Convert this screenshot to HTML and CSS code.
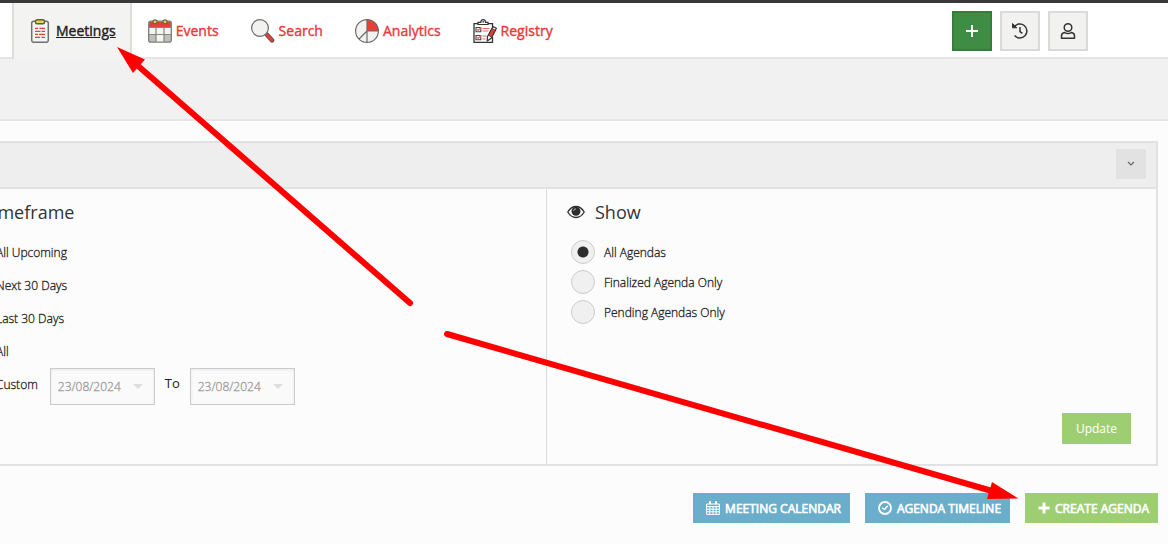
FILE: index.html
```html
<!DOCTYPE html>
<html lang="en">
<head>
<meta charset="utf-8">
<title>Meetings</title>
<link rel="stylesheet" href="styles.css">
</head>
<body>
<header class="topbar">
  <nav class="nav">
    <a class="nav-item active" href="#meetings">
      <svg class="nav-icon" viewBox="0 0 24 24" aria-hidden="true">
        <rect x="3.7" y="2.3" width="16.6" height="21" rx="2" fill="#f4f4f2" stroke="#6f6f6d" stroke-width="1.5"/>
        <rect x="7.5" y="0.8" width="9" height="4" rx="1.6" fill="#e9d63b" stroke="#5d5d4a" stroke-width="1.4"/>
        <path d="M7 9.3h3.2M11.5 9.3H17M7 12.3h5.5M13.5 12.3H17M7 15.3h3M11 15.3h6M7 18.3h5M13.5 18.3H17" stroke="#e83f36" stroke-width="1.2"/>
      </svg>
      <span class="nav-label">Meetings</span>
    </a>
    <a class="nav-item" href="#events">
      <svg class="nav-icon" viewBox="0 0 24 24" aria-hidden="true">
        <rect x="0.7" y="2.2" width="22.6" height="21" rx="1.8" fill="#f4f4f2"/>
        <path d="M1 8V4q0-1.6 1.6-1.6h18.8Q23 2.400 23 4v4z" fill="#e83f36"/>
        <path d="M1 15.500h7V23H1zM16 15.500h7V23h-7z" fill="#bfbfbb"/>
        <rect x="0.7" y="2.2" width="22.600" height="21" rx="1.8" fill="none" stroke="#7c7c7a" stroke-width="1.300"/>
        <path d="M1 8.500h22M1 15.500h22M8 8.500V23M16 8.500V23" stroke="#858583" stroke-width="1.200"/>
        <circle cx="7" cy="2.800" r="2" fill="#e9d63b" stroke="#66664f" stroke-width="1.200"/>
        <circle cx="17" cy="2.800" r="2" fill="#e9d63b" stroke="#66664f" stroke-width="1.200"/>
      </svg>
      <span class="nav-label">Events</span>
    </a>
    <a class="nav-item" href="#search">
      <svg class="nav-icon" viewBox="0 0 24 24" aria-hidden="true">
        <path d="M14 14l2 2" stroke="#555" stroke-width="2"/>
        <path d="M16 15.800l5 5.400" stroke="#5a4a48" stroke-width="4.600" stroke-linecap="round"/>
        <path d="M16.200 16l4.600 5" stroke="#e83f36" stroke-width="3" stroke-linecap="round"/>
        <circle cx="9" cy="9" r="8.400" fill="#f2f2f0" stroke="#6b6b69" stroke-width="1.200"/>
      </svg>
      <span class="nav-label">Search</span>
    </a>
    <a class="nav-item" href="#analytics">
      <svg class="nav-icon" viewBox="0 0 24 24" aria-hidden="true">
        <circle cx="12" cy="12" r="11.400" fill="#f2f2f0"/>
        <path d="M12 .6A11.400 11.400 0 0 1 23.400 12H12z" fill="#e83f36"/>
        <circle cx="12" cy="12" r="11.400" fill="none" stroke="#6b6b69" stroke-width="1.200"/>
        <path d="M12 .6v22.800M12 12h11.400M12 12l-8 8" fill="none" stroke="#6b6b69" stroke-width="1.200"/>
      </svg>
      <span class="nav-label">Analytics</span>
    </a>
    <a class="nav-item" href="#registry">
      <svg class="nav-icon" viewBox="0 0 24 24" aria-hidden="true">
        <path d="M19.500 18v5.300H1V4.700h4M15 4.700h4.500V8" fill="none" stroke="#333" stroke-width="1.300"/>
        <path d="M5 5.500V3.400h2.800q.2-2.700 2.400-2.700t2.400 2.700H15v2.100z" fill="#fff" stroke="#333" stroke-width="1.200"/>
        <circle cx="10.200" cy="2.900" r=".8" fill="#333"/>
        <path d="M3 8.500h4.800v4.200H3zM3 16.500h4.800v4.200H3z" fill="#fff" stroke="#444" stroke-width="1.100"/>
        <path d="M4 10.200l1.300 1.200 2.600-3M4 18.200l1.300 1.200 2.600-3M9.500 9.500h7M9.500 12h6M9.500 17h4M9.500 20h3" fill="none" stroke="#ec6a60" stroke-width="1.100"/>
        <path d="M20 7.500l3.400 1.700-5.200 10-4 2.800.3-4.500z" fill="#fff" stroke="#333" stroke-width="1.200" stroke-linejoin="round"/>
        <path d="M19 9.500l3.500 1.800-3.800 7-3.300-2z" fill="#d9402f" stroke="#333" stroke-width=".8"/>
      </svg>
      <span class="nav-label">Registry</span>
    </a>
  </nav>
  <div class="actions">
    <button class="square add" type="button" aria-label="Add">
      <svg width="14" height="14" viewBox="0 0 14 14"><path d="M7 1v12M1 7h12" stroke="#fff" stroke-width="2"/></svg>
    </button>
    <button class="square" type="button" aria-label="History">
      <svg width="18" height="18" viewBox="0 0 18 18" fill="none" stroke="#333" stroke-width="1.500"><path d="M3 5.200a7 7 0 1 1 .6 8.400M9 5v4.600l2.400 1.800"/><path d="M1.500 1.500v4.300h4.400z" fill="#333" stroke-width="1"/></svg>
    </button>
    <button class="square" type="button" aria-label="Account">
      <svg width="16" height="18" viewBox="0 0 16 18" fill="none" stroke="#333" stroke-width="1.500"><circle cx="8" cy="5.500" r="3.800"/><path d="M4.800 10.600Q1.500 11 1.500 14v2.200h13V14q0-3-3.300-3.400Q8 12.600 4.800 10.600z" stroke-linejoin="round"/></svg>
    </button>
  </div>
</header>
<div class="band"></div>
<main class="main">
  <section class="panel">
    <div class="panel-head">
      <button class="toggle" type="button" aria-label="Collapse">
        <svg width="8" height="6" viewBox="0 0 8 6"><path d="M1 1l3 3 3-3" fill="none" stroke="#666" stroke-width="1.200"/></svg>
      </button>
    </div>
    <div class="panel-body">
      <div class="col timeframe">
        <h2 class="title">Timeframe</h2>
        <div class="options">
          <label class="option"><input class="radio" type="radio" name="timeframe" checked><span>All Upcoming</span></label>
          <label class="option"><input class="radio" type="radio" name="timeframe"><span>Next 30 Days</span></label>
          <label class="option"><input class="radio" type="radio" name="timeframe"><span>Last 30 Days</span></label>
          <label class="option"><input class="radio" type="radio" name="timeframe"><span>All</span></label>
          <div class="custom">
            <label class="option"><input class="radio" type="radio" name="timeframe"><span>Custom</span></label>
            <div class="date">
              <input class="date-input" type="text" value="23/08/2024" aria-label="From date" disabled>
              <span class="caret"></span>
            </div>
            <label class="to" for="to-date">To</label>
            <div class="date">
              <input class="date-input" id="to-date" type="text" value="23/08/2024" disabled>
              <span class="caret"></span>
            </div>
          </div>
        </div>
      </div>
      <div class="col show">
        <h2 class="title">
          <svg class="eye" viewBox="0 0 18 14" aria-hidden="true"><path d="M.8 7Q4 1.500 9 1.500T17.200 7Q14 12.500 9 12.500T.8 7z" fill="none" stroke="#2d2d2d" stroke-width="1.300"/><circle cx="9" cy="6.300" r="4.500" fill="#2d2d2d"/><path d="M6.700 5.800Q7 4 8.800 3.800" fill="none" stroke="#ddd" stroke-width=".9"/></svg>
          Show
        </h2>
        <div class="options">
          <label class="option"><input class="radio" type="radio" name="show" checked><span>All Agendas</span></label>
          <label class="option"><input class="radio" type="radio" name="show"><span>Finalized Agenda Only</span></label>
          <label class="option"><input class="radio" type="radio" name="show"><span>Pending Agendas Only</span></label>
        </div>
        <button class="update" type="button">Update</button>
      </div>
    </div>
  </section>
  <div class="footer-actions">
    <button class="btn blue" type="button">
      <svg width="14" height="14" viewBox="0 0 14 14" aria-hidden="true"><path d="M.6 3h12.800v10.400H.6zM.6 5.600h12.800M.6 8.200h12.800M.6 10.800h12.800M3.800 5v8M7 5v8M10.200 5v8" fill="none" stroke="#fff" stroke-width="1"/><path d="M4 .3v3M10 .3v3" stroke="#fff" stroke-width="2"/></svg>
      <span>MEETING CALENDAR</span>
    </button>
    <button class="btn blue" type="button">
      <svg width="14" height="14" viewBox="0 0 14 14" aria-hidden="true"><circle cx="7" cy="7" r="6" fill="none" stroke="#fff" stroke-width="1.800"/><path d="M4.200 7l2.300 1.400L9.700 4.800" fill="none" stroke="#fff" stroke-width="1.500"/></svg>
      <span>AGENDA TIMELINE</span>
    </button>
    <button class="btn green" type="button">
      <svg width="12" height="12" viewBox="0 0 12 12" aria-hidden="true"><path d="M6 .5v11M.5 6h11" stroke="#fff" stroke-width="3"/></svg>
      <span>CREATE AGENDA</span>
    </button>
  </div>
</main>
<svg class="arrows" width="1168" height="544" viewBox="0 0 1168 544" aria-hidden="true">
  <g stroke="#f00" stroke-width="6" stroke-linecap="round"><path d="M137 65L410 303"/><path d="M447 334L992 491"/></g>
  <path d="M117 47L145 59.500L133 73zM1018.500 498.500L992 482L987 499z" fill="#f00"/>
</svg>
</body>
</html>
```
FILE: styles.css
```css
* { box-sizing: border-box; }
body {
  margin: 0;
  background: #fcfcfc;
  color: #222;
  font-family: "Open Sans", "Noto Sans", sans-serif;
  font-size: 12px;
  overflow-x: hidden;
}
button, input { font: inherit; }
button { display: flex; align-items: center; justify-content: center; border: 0; padding: 0; cursor: pointer; }
.topbar {
  display: flex;
  justify-content: space-between;
  height: 59px;
  padding: 0 80px 0 12px;
  background: #fff;
  border-top: 3px solid #3a3838;
  border-bottom: 2px solid #e5e5e5;
}
.nav { display: flex; height: 56px; }
.nav-item {
  display: flex;
  align-items: center;
  gap: 4px;
  padding: 0 16px;
  color: #e83a3c;
  font-size: 14px;
  -webkit-text-stroke: 0.4px currentColor;
  text-decoration: none;
}
.nav-item.active {
  padding: 0 14px;
  background: #f3f3f1;
  border: solid #dcdcda;
  border-width: 0 2px;
  color: #222;
  text-decoration: underline;
}
.nav-icon { width: 24px; height: 24px; }
.nav-label { padding-bottom: 2px; }
.actions { display: flex; gap: 8px; padding-top: 8px; }
.square { width: 40px; height: 40px; background: #f2f2f0; border: 2px solid #dadada; }
.square.add { background: #3f8d45; border-color: #357d3b; }
.band { height: 62px; background: #f1f1f1; border-bottom: 2px solid #e5e5e5; }
.main { padding: 20px 10px 20px 0; }
.panel { margin-left: -66px; border: 2px solid #e2e2e2; }
.panel-head {
  display: flex;
  justify-content: flex-end;
  padding: 6px 10px 8px;
  background: #eee;
  border-bottom: 2px solid #e2e2e2;
}
.toggle { width: 30px; height: 30px; background: #e2e2e2; }
.panel-body { display: grid; grid-template-columns: 1fr 1fr; }
.col { display: flex; flex-direction: column; padding: 8px 20px 20px; }
.show { min-height: 275px; border-left: 1px solid #dadada; }
.title {
  display: flex;
  align-items: center;
  gap: 10px;
  margin: 0;
  color: #333;
  font-size: 18px;
  line-height: 30px;
  font-weight: 400;
}
.timeframe .title { padding-left: 27px; }
.eye { width: 18px; height: 14px; }
.options { padding: 10px 4px 0; }
.option { display: flex; align-items: center; gap: 9px; height: 30px; font-weight: 300; -webkit-text-stroke: 0.3px currentColor; }
.timeframe .option { gap: 12px; height: 33px; }
.timeframe .options { padding-top: 9px; }
.radio {
  appearance: none;
  width: 24px;
  height: 24px;
  margin: 0;
  background: #f0f0f0;
  border: 1px solid #ccc;
  border-radius: 50%;
}
.radio:checked { background: radial-gradient(circle, #2d2d2d 5px, #f0f0f0 6px); }
.custom { display: flex; align-items: flex-start; }
.date {
  display: flex;
  align-items: center;
  width: 105px;
  height: 37px;
  margin-left: 12px;
  padding: 0 11px 0 7px;
  background: #fafafa;
  border: 1px solid #ccc;
  box-shadow: inset 0 1px 3px #e8e8e8;
}
.date-input { flex: 1; min-width: 0; border: 0; padding: 0; background: none; color: #999; font-weight: 300; -webkit-text-stroke: 0.3px currentColor; }
.caret { border: 5px solid transparent; border-top-color: #ddd; border-bottom: 0; }
.to { margin-left: 10px; font-size: 13px; line-height: 31px; }
.to + .date { margin-left: 10px; }
.update {
  align-self: flex-end;
  width: 69px;
  height: 31px;
  margin: auto 5px 0 0;
  background: #9dcf72;
  color: #fff;
}
.footer-actions { display: flex; justify-content: flex-end; gap: 15px; padding-top: 27px; }
.btn { height: 30px; gap: 5px; padding: 0 9px 0 13px; color: #fff; -webkit-text-stroke: 0.6px currentColor; }
.blue { background: #6aaecc; }
.green { background: #9dcf72; }
.arrows { position: absolute; top: 0; left: 0; pointer-events: none; }
```
